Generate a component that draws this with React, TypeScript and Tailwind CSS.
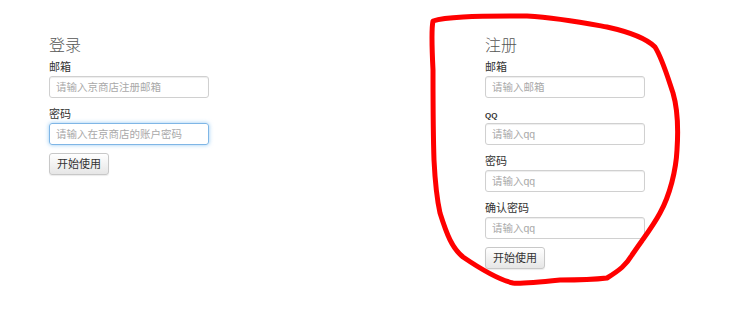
import React from "react";

const font = { fontFamily: '"Liberation Sans", "Noto Sans CJK SC", sans-serif' };

function Field({ label, placeholder, focused, small }: { label: string; placeholder: string; focused?: boolean; small?: boolean }) {
  return (
    <div className="mb-[8px]">
      <div className="h-[16px] text-[11px] leading-[16px] text-[#333] mb-[1px]">
        {small ? <span className="text-[8px] leading-none font-bold">{label}</span> : label}
      </div>
      <input
        readOnly
        placeholder={placeholder}
        className={
          "block w-[160px] h-[22px] px-[6px] text-[10.5px] text-[#555] placeholder:text-[#a9a9a9] rounded-[3px] border outline-none " +
          (focused
            ? "border-[#7fb6e6] shadow-[0_0_4px_rgba(82,168,236,0.6)]"
            : "border-[#d0d0d0] shadow-[inset_0_1px_1px_rgba(0,0,0,0.075)]")
        }
      />
    </div>
  );
}

function Btn() {
  return (
    <button className="block w-[60px] h-[22px] text-[11px] text-[#333] rounded-[3px] border border-[#c8c8c8] bg-gradient-to-b from-white to-[#e6e6e6] shadow-[0_1px_1px_rgba(0,0,0,0.08)]">
      开始使用
    </button>
  );
}

export default function App() {
  return (
    <div className="relative w-[740px] h-[320px] bg-white overflow-hidden" style={font}>
      <div className="flex pt-[35px] pl-[49px]">
        <div className="w-[436px]">
          <div className="text-[16px] leading-[22px] font-light text-[#555] mb-[2px]">登录</div>
          <Field label="邮箱" placeholder="请输入京商店注册邮箱" />
          <Field label="密码" placeholder="请输入在京商店的账户密码" focused />
          <Btn />
        </div>
        <div className="w-[200px]">
          <div className="text-[16px] leading-[22px] font-light text-[#555] mb-[2px]">注册</div>
          <Field label="邮箱" placeholder="请输入邮箱" />
          <Field label="QQ" placeholder="请输入qq" small />
          <Field label="密码" placeholder="请输入qq" />
          <Field label="确认密码" placeholder="请输入qq" />
          <Btn />
        </div>
      </div>
      <svg className="absolute inset-0 pointer-events-none" width="740" height="320" viewBox="0 0 740 320">
        <path
          d="M433 21 C 445 17, 470 16, 527 16 C 560 18, 585 23, 607 27 C 625 31, 645 37, 655 47 C 662 58, 667 75, 673 93 C 678 110, 678 135, 677 150 C 676 170, 670 195, 660 213 C 652 228, 642 240, 632 255 C 626 265, 620 270, 607 278 C 590 280, 570 280, 560 280 C 540 282, 520 284, 513 283 C 500 280, 485 272, 463 257 C 452 248, 447 235, 440 213 C 436 195, 435 180, 434 160 C 433 130, 433 100, 433 70 C 432 50, 431 30, 433 21 Z"
          fill="none"
          stroke="#ff0000"
          strokeWidth="5"
          strokeLinejoin="round"
          strokeLinecap="round"
        />
      </svg>
    </div>
  );
}
